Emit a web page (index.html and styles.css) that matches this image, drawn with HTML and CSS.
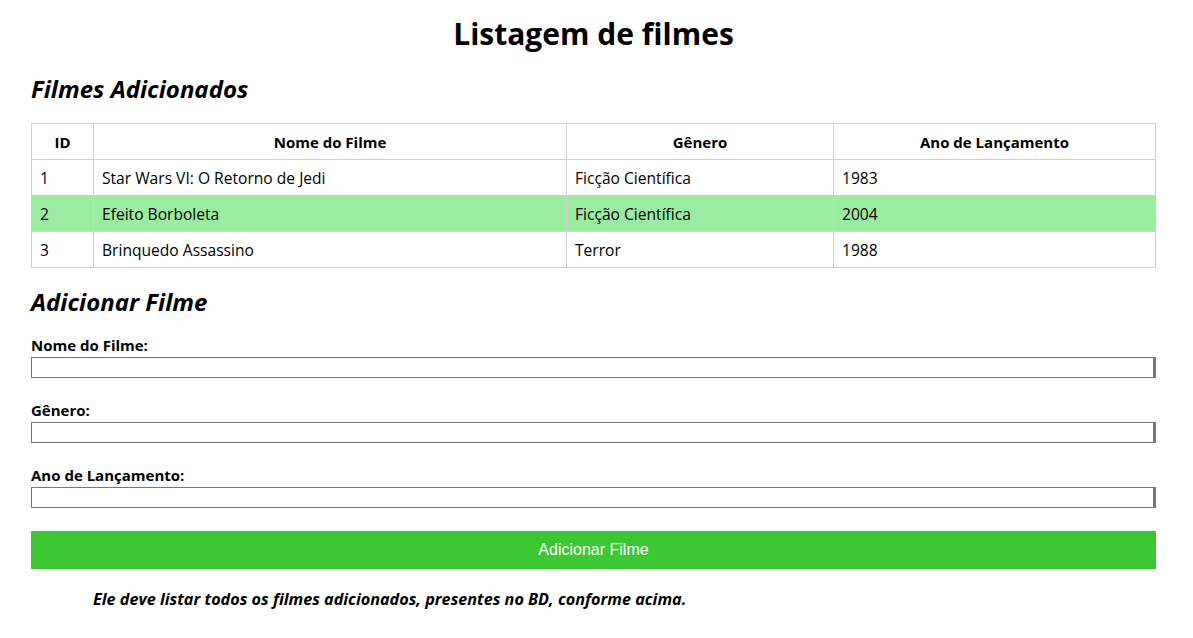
FILE: index.html
```html
<!DOCTYPE html>
<html lang="pt-BR">
<head>
<meta charset="utf-8">
<title>Listagem de filmes</title>
<link rel="stylesheet" href="styles.css">
</head>
<body>
<div class="page">
  <h1 class="title">Listagem de filmes</h1>
  <h2 class="section">Filmes Adicionados</h2>
  <table class="films">
    <thead>
      <tr><th class="c-id">ID</th><th class="c-name">Nome do Filme</th><th class="c-genre">Gênero</th><th class="c-year">Ano de Lançamento</th></tr>
    </thead>
    <tbody>
      <tr><td>1</td><td>Star Wars VI: O Retorno de Jedi</td><td>Ficção Científica</td><td>1983</td></tr>
      <tr class="hl"><td>2</td><td>Efeito Borboleta</td><td>Ficção Científica</td><td>2004</td></tr>
      <tr><td>3</td><td>Brinquedo Assassino</td><td>Terror</td><td>1988</td></tr>
    </tbody>
  </table>
  <h2 class="section section-add">Adicionar Filme</h2>
  <form class="form">
    <label class="field"><span class="lbl">Nome do Filme:</span><input class="inp" type="text"></label>
    <label class="field"><span class="lbl">Gênero:</span><input class="inp" type="text"></label>
    <label class="field"><span class="lbl">Ano de Lançamento:</span><input class="inp" type="text"></label>
    <button class="btn" type="button">Adicionar Filme</button>
  </form>
  <p class="note">Ele deve listar todos os filmes adicionados, presentes no BD, conforme acima.</p>
</div>
</body>
</html>
```
FILE: styles.css
```css
html, body { margin: 0; padding: 0; background: #fff; }
body { font-family: "Open Sans", "DejaVu Sans", sans-serif; color: #000; }
.page { width: 1125px; margin-left: 31px; padding-top: 14px; }
.title { margin: 0; text-align: center; font-size: 30px; font-weight: 700; line-height: 40px; }
.section { margin: 20px 0 0; font-size: 24px; font-style: italic; font-weight: 700; line-height: 30px; }
.films { margin-top: 19px; width: 100%; border-collapse: collapse; font-size: 15.6px; }
.films th, .films td { border: 1px solid #d0d0d0; height: 36px; padding: 0 8px; box-sizing: border-box; }
.films th { font-weight: 700; text-align: center; font-size: 15px; }
.films td { text-align: left; }
.c-id { width: 62px; }
.c-name { width: 473px; }
.c-genre { width: 267px; }
.hl td { background: #9aeca0; }
.section-add { margin-top: 19px; }
.form { margin-top: 19px; display: flex; flex-direction: column; }
.field { display: flex; flex-direction: column; margin-bottom: 23px; }
.lbl { font-size: 15px; font-weight: 700; line-height: 18px; margin-bottom: 3px; }
.inp { height: 21px; box-sizing: border-box; margin: 0; border: 1px solid #767676; border-right-width: 3px; padding: 0 2px; width: 100%; background: #fff; }
.btn { margin-top: 0; height: 38px; border: 0; background: #3cc832; color: #fff; font-family: "Liberation Sans", Arial, sans-serif; font-size: 16px; cursor: pointer; }
.note { margin: 19px 0 0 62px; font-size: 16.2px; font-weight: 700; font-style: italic; }
```
